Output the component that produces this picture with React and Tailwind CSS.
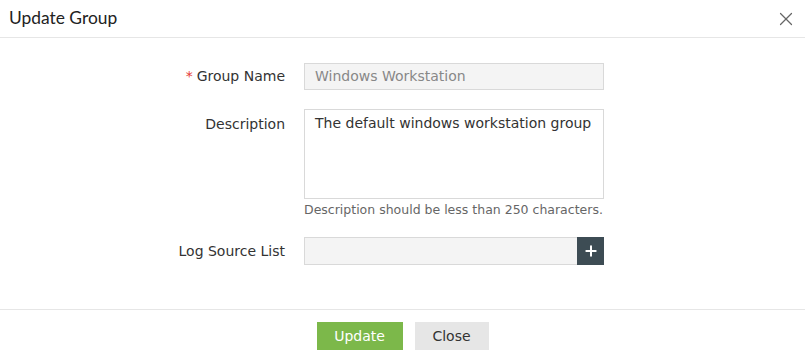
import { X, Plus } from "lucide-react";

export default function App() {
  return (
    <div className="w-[805px] h-[360px] bg-white flex flex-col font-['DejaVu_Sans',sans-serif] text-[14px] text-[#333]">
      <div className="h-[38px] flex items-center justify-between border-b border-[#e6e6e6] pl-[9px] pr-[8px]">
        <h2 className="font-['Lato',sans-serif] text-[17.4px] text-[#222]">Update Group</h2>
        <X size={22} strokeWidth={1.3} className="text-[#666]" />
      </div>

      <div className="flex-1 pt-[25px] flex flex-col">
        <div className="flex items-center">
          <label className="w-[304px] pr-[19px] text-right">
            <span className="text-[#e53935] mr-[4px]">*</span>Group Name
          </label>
          <div className="w-[300px] h-[27px] border border-[#d9d9d9] bg-[#f4f4f4] px-[10px] flex items-center text-[#888]">
            Windows Workstation
          </div>
        </div>

        <div className="flex mt-[19px]">
          <label className="w-[304px] pr-[19px] text-right pt-[5px]">Description</label>
          <div>
            <div className="w-[300px] h-[90px] border border-[#d9d9d9] px-[10px] pt-[3px]">
              The default windows workstation group
            </div>
            <p className="text-[12.5px] leading-[16px] text-[#666] mt-[3px]">Description should be less than 250 characters.</p>
          </div>
        </div>

        <div className="flex items-center mt-[19px]">
          <label className="w-[304px] pr-[19px] text-right">Log Source List</label>
          <div className="w-[273px] h-[28px] border border-[#d9d9d9] border-r-0 bg-[#f4f4f4]" />
          <button className="w-[27px] h-[28px] bg-[#3d4c54] flex items-center justify-center text-white">
            <Plus size={16} strokeWidth={3} />
          </button>
        </div>
      </div>

      <div className="h-[51px] border-t border-[#e6e6e6] flex justify-center items-start pt-[12px] gap-[12px]">
        <button className="w-[86px] h-[28px] bg-[#7cb84a] text-white text-[14px]">Update</button>
        <button className="w-[74px] h-[28px] bg-[#e6e6e6] text-[#333] text-[14px]">Close</button>
      </div>
    </div>
  );
}
